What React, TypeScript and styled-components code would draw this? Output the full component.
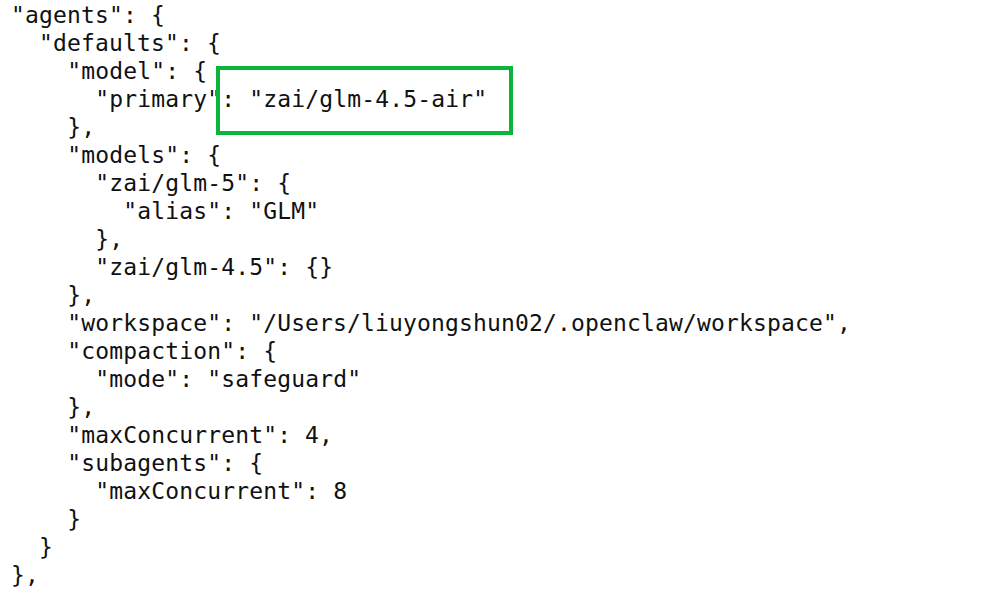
import React from "react";
import styled, { createGlobalStyle } from "styled-components";

const Global = createGlobalStyle`
  html, body { margin: 0; padding: 0; background: #ffffff; }
  body { width: 986px; height: 594px; overflow: hidden; }
`;

const Page = styled.div`
  position: relative;
  width: 986px;
  height: 594px;
  background: #ffffff;
  padding: 1px 0 0 11px;
  box-sizing: border-box;
`;

const Code = styled.pre`
  margin: 0;
  font-family: "DejaVu Sans Mono", "Liberation Mono", monospace;
  font-size: 23px;
  line-height: 28px;
  color: #111111;
  letter-spacing: 0.15px;
`;

const Line = styled.div<{ $indent: number }>`
  padding-left: ${(p) => p.$indent * 2}ch;
  margin-left: ${(p) => p.$indent * 0.4}px;
  white-space: pre;
  height: 28px;
`;

const Highlight = styled.div`
  position: absolute;
  left: 216px;
  top: 66px;
  width: 297px;
  height: 69px;
  box-sizing: border-box;
  border: 4px solid #0bb53b;
  pointer-events: none;
`;

const lines: [number, string][] = [
  [0, '"agents": {'],
  [1, '"defaults": {'],
  [2, '"model": {'],
  [3, '"primary": "zai/glm-4.5-air"'],
  [2, "},"],
  [2, '"models": {'],
  [3, '"zai/glm-5": {'],
  [4, '"alias": "GLM"'],
  [3, "},"],
  [3, '"zai/glm-4.5": {}'],
  [2, "},"],
  [2, '"workspace": "/Users/liuyongshun02/.openclaw/workspace",'],
  [2, '"compaction": {'],
  [3, '"mode": "safeguard"'],
  [2, "},"],
  [2, '"maxConcurrent": 4,'],
  [2, '"subagents": {'],
  [3, '"maxConcurrent": 8'],
  [2, "}"],
  [1, "}"],
  [0, "},"],
];

export default function App() {
  return (
    <>
      <Global />
      <Page>
        <Code>
          {lines.map(([indent, text], i) => (
            <Line key={i} $indent={indent}>
              {text}
            </Line>
          ))}
        </Code>
        <Highlight />
      </Page>
    </>
  );
}
